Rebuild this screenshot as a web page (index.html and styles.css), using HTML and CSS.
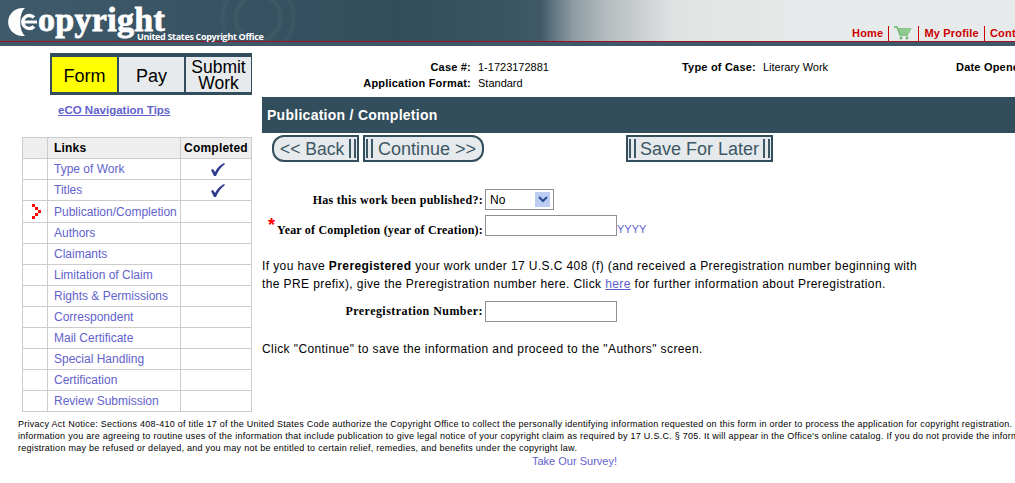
FILE: index.html
```html
<!DOCTYPE html>
<html lang="en">
<head>
<meta charset="utf-8">
<title>eCO Publication / Completion</title>
<link rel="stylesheet" href="styles.css">
</head>
<body>
<div class="page">
  <header class="masthead">
    <div class="brand">
      <span class="logo"><svg class="logo-ring" width="30" height="28" viewBox="0 0 30 28"><path fill="#fff" d="M18 .3A14 14 0 1 0 18 27.700A6 14 0 0 1 18 .3z"/><path fill="none" stroke="#fff" stroke-width="3.500" d="M27 9.500A6.500 6.500 0 1 0 27 18.500"/><path fill="#fff" d="M17 12.500h13v3H17z"/></svg><span class="logo-word">opyright</span></span>
      <span class="office">United States Copyright Office</span>
    </div>
    <nav class="toplinks">
      <a class="toplink">Home</a>
      <span class="cart"><svg width="18" height="14" viewBox="0 0 18 14"><path fill="none" stroke="#6cb56c" stroke-width="1.3" d="M0 1h3l3 8h8"/><path fill="#8fcc8f" stroke="#6cb56c" stroke-width=".6" d="M4 2.500h13l-2.400 5H6z"/><circle cx="7" cy="12" r="1.400" fill="#6cb56c"/><circle cx="13" cy="12" r="1.400" fill="#6cb56c"/></svg></span>
      <a class="toplink">My Profile</a>
      <a class="toplink">Contact Us</a>
    </nav>
  </header>
  <div class="body-row">
    <aside class="side">
      <div class="steps">
        <div class="step step-active">Form</div>
        <div class="step">Pay</div>
        <div class="step step-small">Submit Work</div>
      </div>
      <a class="tips">eCO Navigation Tips</a>
      <table class="links">
        <tr class="links-head"><th class="c-mark"></th><th class="c-link">Links</th><th class="c-done">Completed</th></tr>
        <tr><td></td><td><a>Type of Work</a></td><td class="check"><svg width="14" height="13" viewBox="0 0 14 13"><path fill="#2f3a8c" d="M0 7l2-1 2 3c2-4 5-7 9-9l1 1C10 4 7 8 5 13H3z"/></svg></td></tr>
        <tr><td></td><td><a>Titles</a></td><td class="check"><svg width="14" height="13" viewBox="0 0 14 13"><path fill="#2f3a8c" d="M0 7l2-1 2 3c2-4 5-7 9-9l1 1C10 4 7 8 5 13H3z"/></svg></td></tr>
        <tr class="row-tall"><td class="mark"><svg width="9" height="15" viewBox="0 0 9 15"><path fill="#f00" d="M0 0h3v3H0zM3 3h3v3H3zM6 6h3v3H6zM3 9h3v3H3zM0 12h3v3H0z"/></svg></td><td><a>Publication/Completion</a></td><td></td></tr>
        <tr><td></td><td><a>Authors</a></td><td></td></tr>
        <tr><td></td><td><a>Claimants</a></td><td></td></tr>
        <tr><td></td><td><a>Limitation of Claim</a></td><td></td></tr>
        <tr><td></td><td><a>Rights &amp; Permissions</a></td><td></td></tr>
        <tr><td></td><td><a>Correspondent</a></td><td></td></tr>
        <tr><td></td><td><a>Mail Certificate</a></td><td></td></tr>
        <tr><td></td><td><a>Special Handling</a></td><td></td></tr>
        <tr><td></td><td><a>Certification</a></td><td></td></tr>
        <tr><td></td><td><a>Review Submission</a></td><td></td></tr>
      </table>
    </aside>
    <main class="main">
      <div class="case">
        <div class="case-col case-col-1">
          <div class="case-row"><b>Case #:</b><span>1-1723172881</span></div>
          <div class="case-row"><b>Application Format:</b><span>Standard</span></div>
        </div>
        <div class="case-col case-col-2"><div class="case-row"><b>Type of Case:</b><span>Literary Work</span></div></div>
        <div class="case-col case-col-3"><div class="case-row"><b>Date Opened:</b><span>2/14/2009</span></div></div>
      </div>
      <h1 class="title">Publication / Completion</h1>
      <div class="buttons">
        <button class="btn btn-back">&lt;&lt; Back<i class="bars"></i></button>
        <button class="btn btn-cont"><i class="bars"></i>Continue &gt;&gt;</button>
        <button class="btn btn-save"><i class="bars"></i>Save For Later<i class="bars"></i></button>
      </div>
      <div class="field field-first">
        <label class="label">Has this work been published?:</label>
        <span class="select"><span class="select-val">No</span><span class="select-arrow"><svg width="10" height="7" viewBox="0 0 10 7"><path fill="none" stroke="#2b4a8c" stroke-width="2" d="M1 1l4 4 4-4"/></svg></span></span>
      </div>
      <div class="field field-year">
        <label class="label label-year"><span class="req">*</span>Year of Completion (year of Creation):</label>
        <span class="input"></span><span class="hint">YYYY</span>
      </div>
      <p class="para para-first">If you have <b>Preregistered</b> your work under 17 U.S.C 408 (f) (and received a Preregistration number beginning with<br>the PRE prefix), give the Preregistration number here. Click <a class="here">here</a> for further information about Preregistration.</p>
      <div class="field field-pre">
        <label class="label label-pre">Preregistration Number:</label>
        <span class="input"></span>
      </div>
      <p class="para para-last">Click "Continue" to save the information and proceed to the "Authors" screen.</p>
    </main>
  </div>
  <footer class="notice">
    <p class="notice-text">Privacy Act Notice: Sections 408-410 of title 17 of the United States Code authorize the Copyright Office to collect the personally identifying information requested on this form in order to process the application for copyright registration. By providing this<br>information you are agreeing to routine uses of the information that include publication to give legal notice of your copyright claim as required by 17 U.S.C. § 705. It will appear in the Office's online catalog. If you do not provide the information requested,<br>registration may be refused or delayed, and you may not be entitled to certain relief, remedies, and benefits under the copyright law.</p>
    <a class="survey">Take Our Survey!</a>
  </footer>
</div>
</body>
</html>
```
FILE: styles.css
```css
html, body { margin: 0; padding: 0; background: #fff; overflow: hidden; }
.page { width: 1400px; font-family: "Liberation Sans", Arial, sans-serif; color: #000; }
.masthead { height: 46px; box-sizing: border-box; position: relative; display: flex; justify-content: space-between; border-bottom: 4px solid #3d5868; background: radial-gradient(circle at 258px 18px, transparent 0 20px, rgba(255,255,255,.04) 21px 24px, transparent 25px 33px, rgba(255,255,255,.03) 34px 37px, transparent 38px), linear-gradient(90deg, #3f5a6a 0, #324d5c 400px, #3a5563 515px, #3f5967 540px, #5f7480 553px, #8d9ba2 573px, #b5bcbf 607px, #e0e2e3 673px, #e4e5e5 720px, #e7eaeb 820px); box-shadow: inset 0 -1px 0 #a01020; }
.brand { width: 300px; position: relative; }
.logo { position: absolute; left: 7px; top: 7px; display: flex; align-items: flex-start; }
.logo-ring { display: block; margin-top: 1px; }
.logo-word { font: bold 34px/24px "Liberation Serif", serif; color: #fff; margin: 1px 0 0 1px; letter-spacing: .3px; -webkit-text-stroke: .8px #fff; }
.office { position: absolute; left: 137px; top: 33px; font: bold 9px/7px "Open Sans", sans-serif; color: #fff; white-space: nowrap; letter-spacing: -.32px; }
.toplinks { position: absolute; left: 852px; top: 25px; height: 16px; display: flex; align-items: center; white-space: nowrap; }
.toplink { font: bold 11px/15px "Liberation Sans", sans-serif; color: #c00; letter-spacing: .2px; padding: 0 5px; border-left: 1px solid #c00; }
.toplink:first-child { border-left: 0; padding-left: 0; }
.cart { border-left: 1px solid #c00; height: 15px; padding: 0 6px 0 5px; display: flex; align-items: center; }

.body-row { display: flex; align-items: flex-start; }
.side { width: 262px; flex: none; }
.steps { margin: 7px 0 0 50px; width: 202px; height: 42px; box-sizing: border-box; background: #324d5c; padding: 4px 0 3px 2px; display: grid; grid-template-columns: 65px 65px 65px; column-gap: 2px; }
.step { background: #e6eaec; font-size: 18px; line-height: 20px; display: flex; align-items: center; justify-content: center; text-align: center; padding-top: 2px; box-sizing: border-box; }
.step-active { background: #ff0; }
.step-small { font-size: 17.5px; line-height: 16px; padding-top: 1px; }
.tips { display: block; margin: 8px 0 0 58px; font: bold 11.5px/15px "Liberation Sans", sans-serif; color: #6262cc; text-decoration: underline; }
.links { margin: 19px 0 0 22px; width: 230px; border-collapse: collapse; table-layout: fixed; }
.links th, .links td { border: 1px solid #ccc; padding: 0; height: 20px; font-size: 12px; }
.links tr.row-tall td { height: 21px; }
.links-head th { background: #eee; font-size: 12px; text-align: left; padding-left: 6px; letter-spacing: .2px; }
.links th.c-mark { width: 24px; padding: 0; }
.links th.c-link { width: 126px; }
.links th.c-done { text-align: center; padding: 0; }
.links td a { color: #6262cc; display: block; padding-left: 6px; white-space: nowrap; }
.check { text-align: center; line-height: 0; }
.check svg { margin-left: 4px; }
.mark { padding-left: 9px !important; line-height: 0; }

.main { flex: 1; }
.case { height: 51px; box-sizing: border-box; padding-top: 13px; display: flex; font-size: 11px; line-height: 16px; }
.case-col-1 { width: 420px; }
.case-col-2 { width: 274px; }
.case-row { display: flex; }
.case-row b { letter-spacing: .2px; }
.case-row span { margin-left: 7px; }
.case-col-1 .case-row b { width: 209px; text-align: right; flex: none; }
.title { margin: 0; height: 36px; background: #324d5c; color: #fff; font-size: 14px; line-height: 36px; padding-left: 5px; letter-spacing: .27px; }
.buttons { display: flex; height: 27px; margin: 2px 0 0 10px; }
.btn { font: 18px/21px "Liberation Sans", sans-serif; color: #3c5766; background: #e6eaec; border: 2px solid #324d5c; padding: 2px 1px 0; height: 27px; box-sizing: border-box; display: flex; align-items: center; justify-content: space-between; white-space: nowrap; }
.btn-back { width: 87px; border-radius: 12px 0 0 12px; padding-left: 6px; font-size: 17.5px; }
.btn-cont { width: 121px; margin-left: 4px; border-radius: 0 12px 12px 0; padding-right: 6px; }
.btn-save { width: 147px; margin-left: 142px; }
.bars { display: block; width: 3px; height: 19px; margin-bottom: 2px; border-left: 2px solid #3c5766; border-right: 2px solid #3c5766; flex: none; }
.field { display: flex; align-items: center; height: 22px; }
.field-first { margin-top: 27px; height: 21px; }
.field-year { margin-top: 5px; height: 21px; align-items: flex-end; }
.field-pre { margin-top: 7px; }
.label { width: 221px; flex: none; text-align: right; font: bold 12px/14px "Liberation Serif", serif; margin-right: 2px; white-space: nowrap; letter-spacing: .3px; }
.label-year { letter-spacing: .2px; line-height: 12px; }
.label-pre { letter-spacing: .45px; }
.req { color: #f00; font: bold 18px/12px "Liberation Sans", sans-serif; vertical-align: 3px; margin-right: 2px; }
.select { width: 69px; height: 21px; box-sizing: border-box; border: 1px solid #8f8f8f; display: flex; justify-content: space-between; align-items: center; padding: 0 3px 0 4px; font-size: 12px; }
.select-arrow { width: 15px; height: 15px; background: #bccdf1; display: flex; align-items: center; justify-content: center; }
.input { width: 132px; height: 21px; box-sizing: border-box; border: 1px solid #8f8f8f; display: block; }
.hint { font-size: 11px; line-height: 14px; color: #6262cc; }
.para { margin: 0; font-size: 12px; line-height: 18px; letter-spacing: .4px; white-space: nowrap; }
.para-first { margin-top: 21px; }
.here { color: #5e5ecb; text-decoration: underline; }
.para-last { margin-top: 18px; }

.notice { margin-top: 6px; }
.notice-text { margin: 0 0 0 18px; font-size: 9px; line-height: 12px; letter-spacing: .26px; white-space: nowrap; }
.survey { display: block; margin: 0 0 0 532px; font-size: 11px; line-height: 14px; color: #6262cc; }
```
